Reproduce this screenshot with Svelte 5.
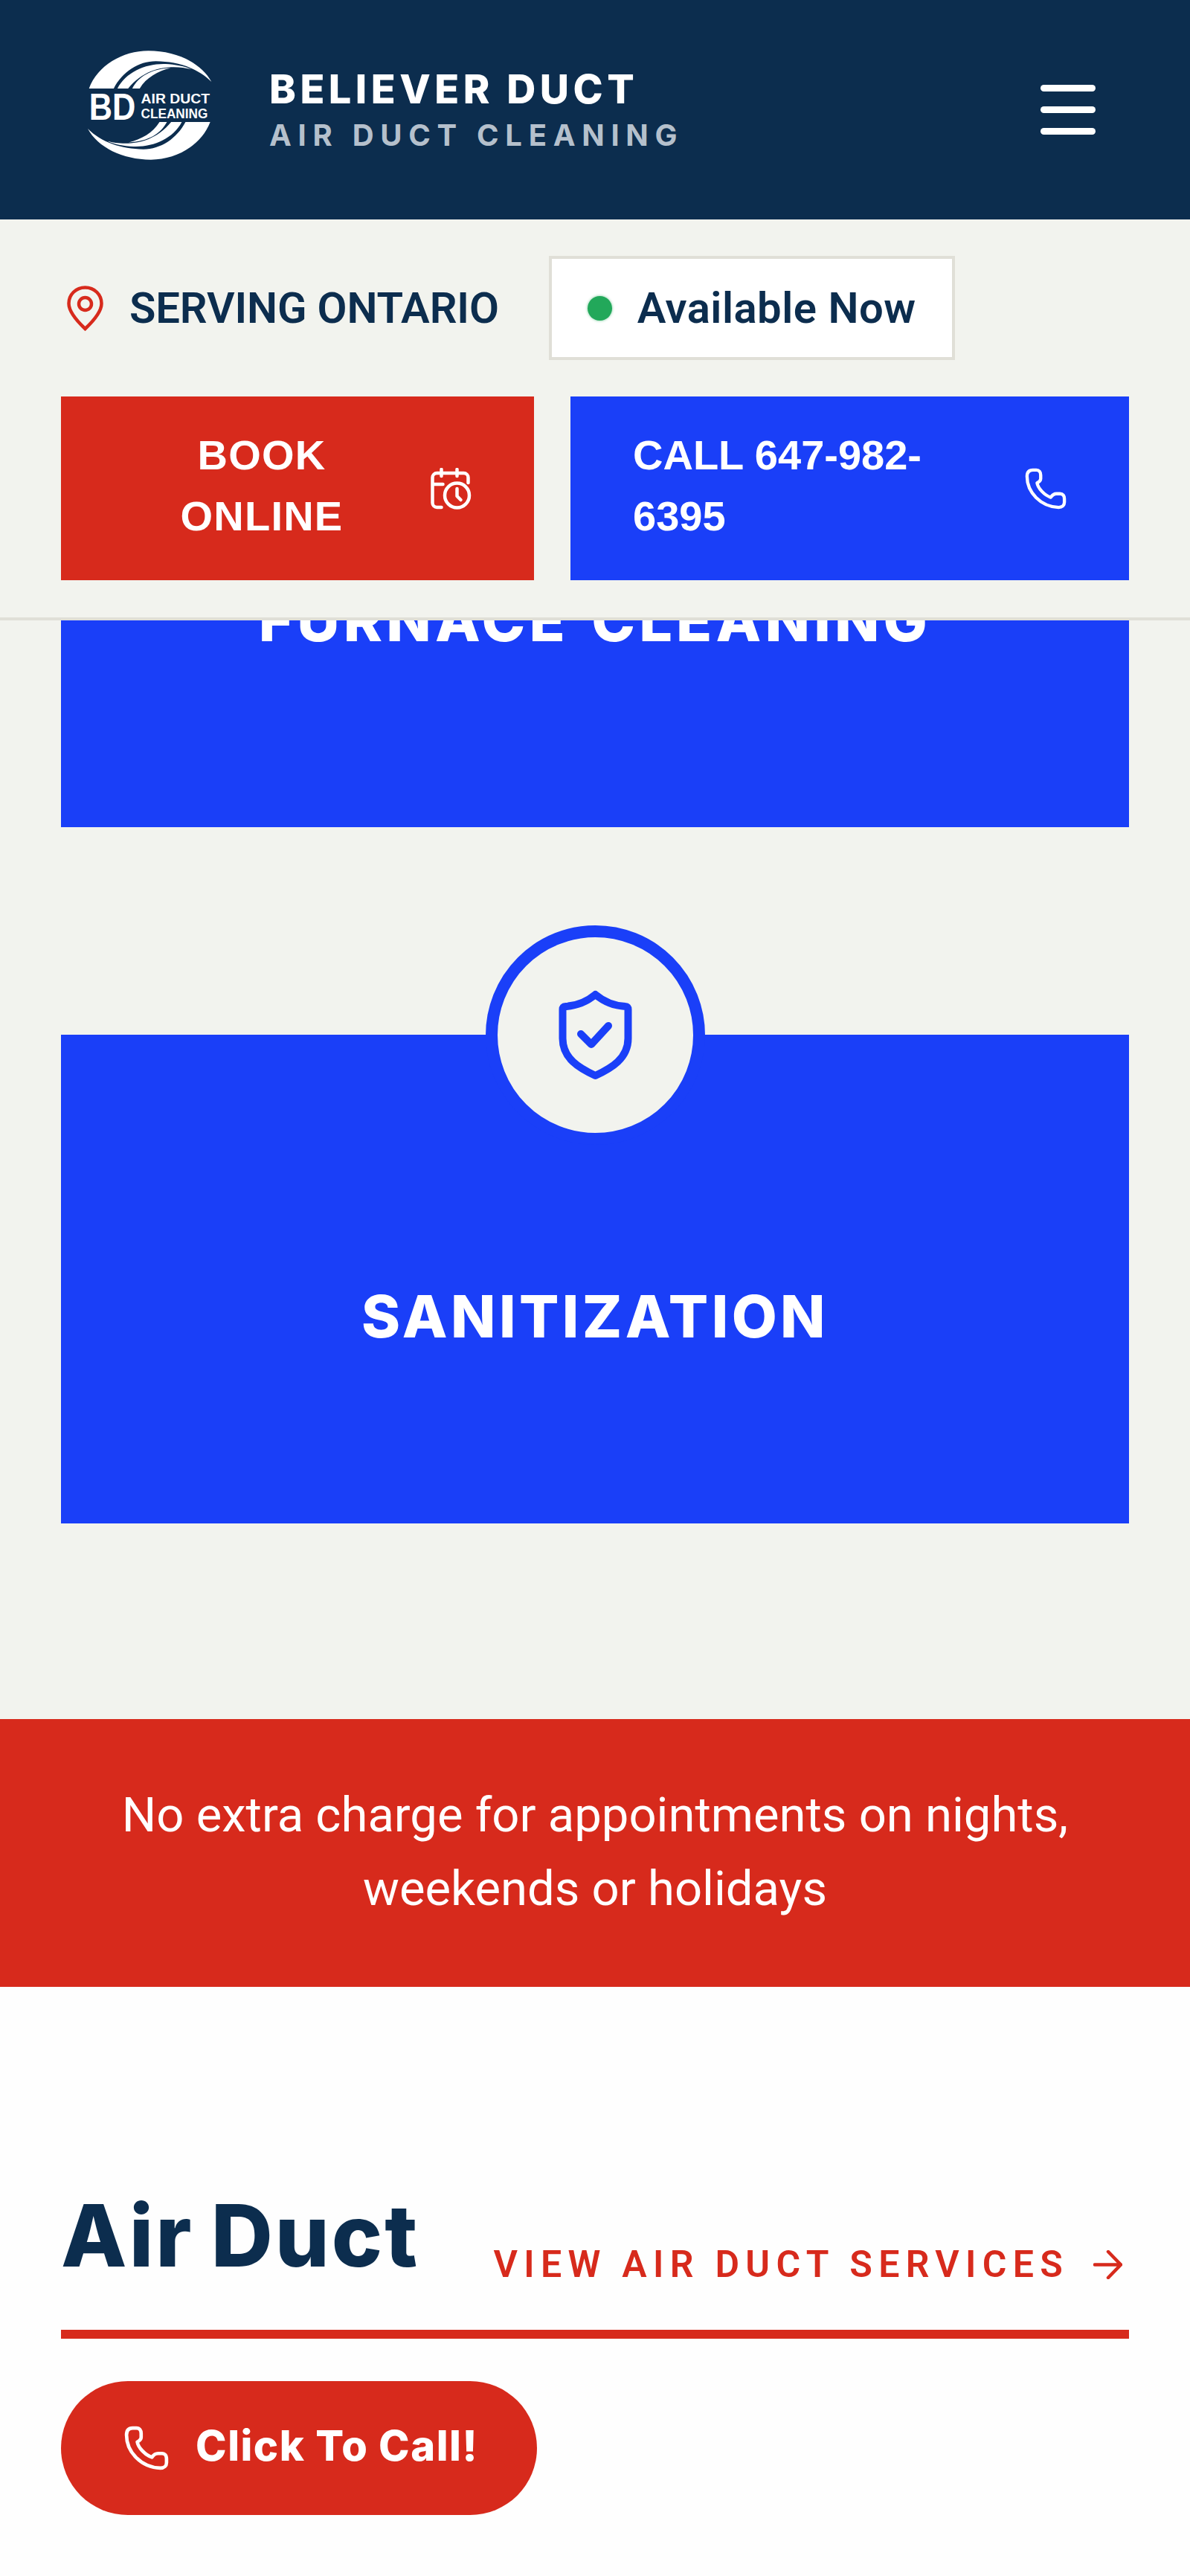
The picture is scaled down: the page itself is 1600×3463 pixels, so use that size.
<script>
  const brand = { name: 'BELIEVER DUCT', sub: 'AIR DUCT CLEANING' };
</script>

<div class="page">
  <div class="top">
    <header class="header">
      <svg class="logo" viewBox="85 55 505 440" aria-label="BD Air Duct Cleaning">
        <g class="swoosh">
          <path d="M90 207C125 115 225 55 330 55C445 55 545 105 585 180C530 125 450 98 360 97C290 97 225 140 190 207Z" />
          <path d="M205 207C240 140 320 105 400 108C440 110 480 118 505 130C450 115 330 105 248 207Z" />
          <path d="M265 207C290 160 340 128 420 125C370 135 320 165 295 207Z" />
        </g>
        <g class="swoosh" transform="rotate(180 335 275)">
          <path d="M90 207C125 115 225 55 330 55C445 55 545 105 585 180C530 125 450 98 360 97C290 97 225 140 190 207Z" />
          <path d="M205 207C240 140 320 105 400 108C440 110 480 118 505 130C450 115 330 105 248 207Z" />
          <path d="M265 207C290 160 340 128 420 125C370 135 320 165 295 207Z" />
        </g>
        <text class="lg-bd" x="90" y="335" textLength="188" lengthAdjust="spacingAndGlyphs">BD</text>
        <text class="lg-a" x="300" y="268" textLength="278" lengthAdjust="spacingAndGlyphs">AIR DUCT</text>
        <text class="lg-a" x="300" y="327" textLength="270" lengthAdjust="spacingAndGlyphs">CLEANING</text>
      </svg>
      <div class="brand">
        <div class="brand-name">{brand.name}</div>
        <div class="brand-sub">{brand.sub}</div>
      </div>
      <div class="burger"><span></span><span></span><span></span></div>
    </header>

    <div class="bar">
      <div class="status">
        <svg class="pin" viewBox="0 0 49 61" fill="none">
          <path d="M24.5 2.5C12 2.5 2.5 12 2.5 24C2.5 36 15 49 24.5 58C34 49 46.500 36 46.500 24C46.500 12 37 2.500 24.500 2.500Z" />
          <circle cx="24.500" cy="24.500" r="8.500" />
        </svg>
        <span class="serving">SERVING ONTARIO</span>
        <div class="badge"><i class="dot"></i><span>Available Now</span></div>
      </div>
      <div class="actions">
        <a class="cta red">
          <span class="cta-text center">BOOK<br />ONLINE</span>
          <svg class="cta-icon" viewBox="0 0 55 56" fill="none">
            <path d="M15 53H9A6 6 0 0 1 3 47V13A6 6 0 0 1 9 7H45A6 6 0 0 1 51 13V20M15 2V11M36 2V11M3 22H17" />
            <circle cx="36" cy="37" r="16.500" />
            <path d="M36 28V38L41 43" />
          </svg>
        </a>
        <a class="cta blue">
          <span class="cta-text">CALL 647-982-6395</span>
          <svg class="cta-icon" viewBox="0 0 58 58" fill="none">
            <path d="M3 12C3 6 6 3 11 3L16 3C20 3 22 6 22 10L22 15C22 18 19 20 17 21C18 28 27 38 36 41C38 38 40 36 44 36L49 36C53 36 55 39 55 43L55 48C55 52 52 55 47 55C22 54 3 34 3 12Z" />
          </svg>
        </a>
      </div>
    </div>
  </div>

  <section class="services">
    <article class="card"><h3 class="wide">FURNACE CLEANING</h3></article>
    <article class="card">
      <div class="medal">
        <svg viewBox="0 0 99 121" fill="none">
          <path d="M49.500 6C40 14 28 21 9 22Q5.500 22 5.500 26V65C5.500 92 28 105 49.500 115C71 105 93.500 92 93.500 65V26Q93.500 22 90 22C71 21 59 14 49.500 6Z" />
          <path d="M30 59L44 73L67 48" />
        </svg>
      </div>
      <h3>SANITIZATION</h3>
    </article>
  </section>

  <div class="notice">No extra charge for appointments on nights,<br />weekends or holidays</div>

  <section class="air">
    <div class="air-head">
      <h2>Air Duct</h2>
      <a class="view">
        <span>VIEW AIR DUCT SERVICES</span>
        <svg viewBox="0 0 39 39" fill="none"><path d="M2 19.500H37M20 2L37 19.500L20 37" /></svg>
      </a>
    </div>
    <a class="pill">
      <svg viewBox="0 0 58 58" fill="none">
        <path d="M3 12C3 6 6 3 11 3L16 3C20 3 22 6 22 10L22 15C22 18 19 20 17 21C18 28 27 38 36 41C38 38 40 36 44 36L49 36C53 36 55 39 55 43L55 48C55 52 52 55 47 55C22 54 3 34 3 12Z" />
      </svg>
      <span>Click To Call!</span>
    </a>
  </section>
</div>

<style>
  :global(body) { margin: 0; background: #f2f3ee; }
  .page { width: 1600px; height: 3463px; overflow: hidden; font-family: Roboto, sans-serif; background: #f2f3ee; }

  .top { position: relative; z-index: 2; }
  .header { height: 295px; background: #0c2d4e; display: flex; align-items: center; padding: 0 127px 0 118px; box-sizing: border-box; }
  .logo { width: 168px; height: 147px; margin-top: -12px; flex: none; }
  .swoosh path { fill: #fff; }
  .lg-bd { font: 700 150px "Liberation Sans", sans-serif; fill: #fff; }
  .lg-a { font: 700 56px "Liberation Sans", sans-serif; fill: #fff; }
  .brand { margin-left: 76px; font-family: Inter, sans-serif; font-weight: 800; }
  .brand-name { font-size: 54px; line-height: 60px; color: #fff; letter-spacing: 5.500px; }
  .brand-sub { font-size: 40px; line-height: 46px; color: #b5c0cc; font-weight: 700; letter-spacing: 8.700px; margin-top: 9px; }
  .burger { margin-left: auto; width: 74px; display: flex; flex-direction: column; gap: 20px; }
  .burger span { height: 9px; border-radius: 5px; background: #fff; }

  .bar { background: #f2f3ee; border-bottom: 4px solid #e0dfd7; padding: 49px 82px 50px; display: flex; flex-direction: column; gap: 49px; }
  .status { display: flex; align-items: center; padding-left: 8px; font-size: 58px; font-weight: 600; color: #0c2d4e; }
  .pin { width: 49px; height: 61px; flex: none; margin-right: 35px; }
  .pin path, .pin circle { stroke: #d72a1c; stroke-width: 4.500; }
  .serving { letter-spacing: -0.150px; }
  .badge { margin-left: 67px; width: 546px; height: 140px; box-sizing: border-box; border: 4px solid #e0dfd7; background: #fff; display: flex; align-items: center; padding-left: 48px; gap: 34px; letter-spacing: 0.500px; }
  .dot { width: 33px; height: 33px; border-radius: 50%; background: #22a85a; box-shadow: 0 0 3px 1px rgba(34, 168, 90, 0.35); flex: none; }

  .actions { display: flex; gap: 49px; }
  .cta { height: 247px; display: flex; align-items: center; padding: 0 84px; box-sizing: border-box; color: #fff; font-family: "Liberation Sans", sans-serif; font-weight: 700; font-size: 56px; line-height: 82px; }
  .cta.red { width: 636px; background: #d72a1c; }
  .cta.blue { width: 751px; background: #1a3ff8; }
  .cta-text { flex: 1; min-width: 0; margin-top: -7px; }
  .cta-text.center { text-align: center; padding-right: 40px; letter-spacing: 1.200px; }
  .cta.blue .cta-text { padding-right: 100px; }
  .cta-icon { width: 56px; height: 56px; flex: none; }
  .cta-icon path, .cta-icon circle { stroke: #fff; stroke-width: 4.500; stroke-linecap: round; stroke-linejoin: round; }

  .services { margin-top: -379px; padding: 0 82px 263px; display: flex; flex-direction: column; gap: 279px; }
  .card { position: relative; height: 657px; flex: none; background: #1a3ff8; color: #fff; display: flex; justify-content: center; padding-top: 338px; box-sizing: border-box; }
  .card h3 { margin: 0; font: 800 79px/80px Inter, sans-serif; letter-spacing: 4.400px; }
  .card h3.wide { letter-spacing: 5.200px; word-spacing: 8px; }
  .medal { position: absolute; left: 570.500px; top: -147.500px; width: 295px; height: 295px; box-sizing: border-box; border-radius: 50%; border: 16px solid #1a3ff8; background: #f2f3ee; display: flex; align-items: center; justify-content: center; }
  .medal svg { width: 99px; height: 121px; }
  .medal path { stroke: #1a3ff8; stroke-width: 10; stroke-linecap: round; stroke-linejoin: round; }

  .notice { background: #d72a1c; color: #fff; height: 360px; display: flex; align-items: center; justify-content: center; text-align: center; font-size: 65.200px; line-height: 99px; padding: 0 82px 3px; box-sizing: border-box; }

  .air { background: #fefefe; height: 793px; padding: 0 82px; box-sizing: border-box; }
  .air-head { height: 473px; box-sizing: border-box; border-bottom: 12px solid #d72a1c; display: flex; justify-content: space-between; align-items: flex-end; padding-bottom: 59px; }
  .air-head h2 { margin: 0 0 9px; font: 800 115px/116px Inter, sans-serif; color: #0c2d4e; letter-spacing: 3px; word-spacing: -5px; }
  .view { display: flex; align-items: center; gap: 33px; color: #d72a1c; font-size: 50px; font-weight: 600; letter-spacing: 8.300px; padding-right: 9px; }
  .view svg { width: 39px; height: 39px; }
  .view path { stroke: #d72a1c; stroke-width: 4.500; stroke-linecap: round; stroke-linejoin: round; }
  .pill { margin-top: 57px; width: 640px; height: 180px; border-radius: 90px; background: #d72a1c; color: #fff; display: flex; align-items: center; padding-left: 85px; box-sizing: border-box; gap: 36px; font: 800 56px Inter, sans-serif; letter-spacing: 1.500px; }
  .pill span { margin-top: -6px; }
  .pill svg { width: 60px; height: 60px; flex: none; }
  .pill path { stroke: #fff; stroke-width: 4.500; stroke-linejoin: round; }
</style>
